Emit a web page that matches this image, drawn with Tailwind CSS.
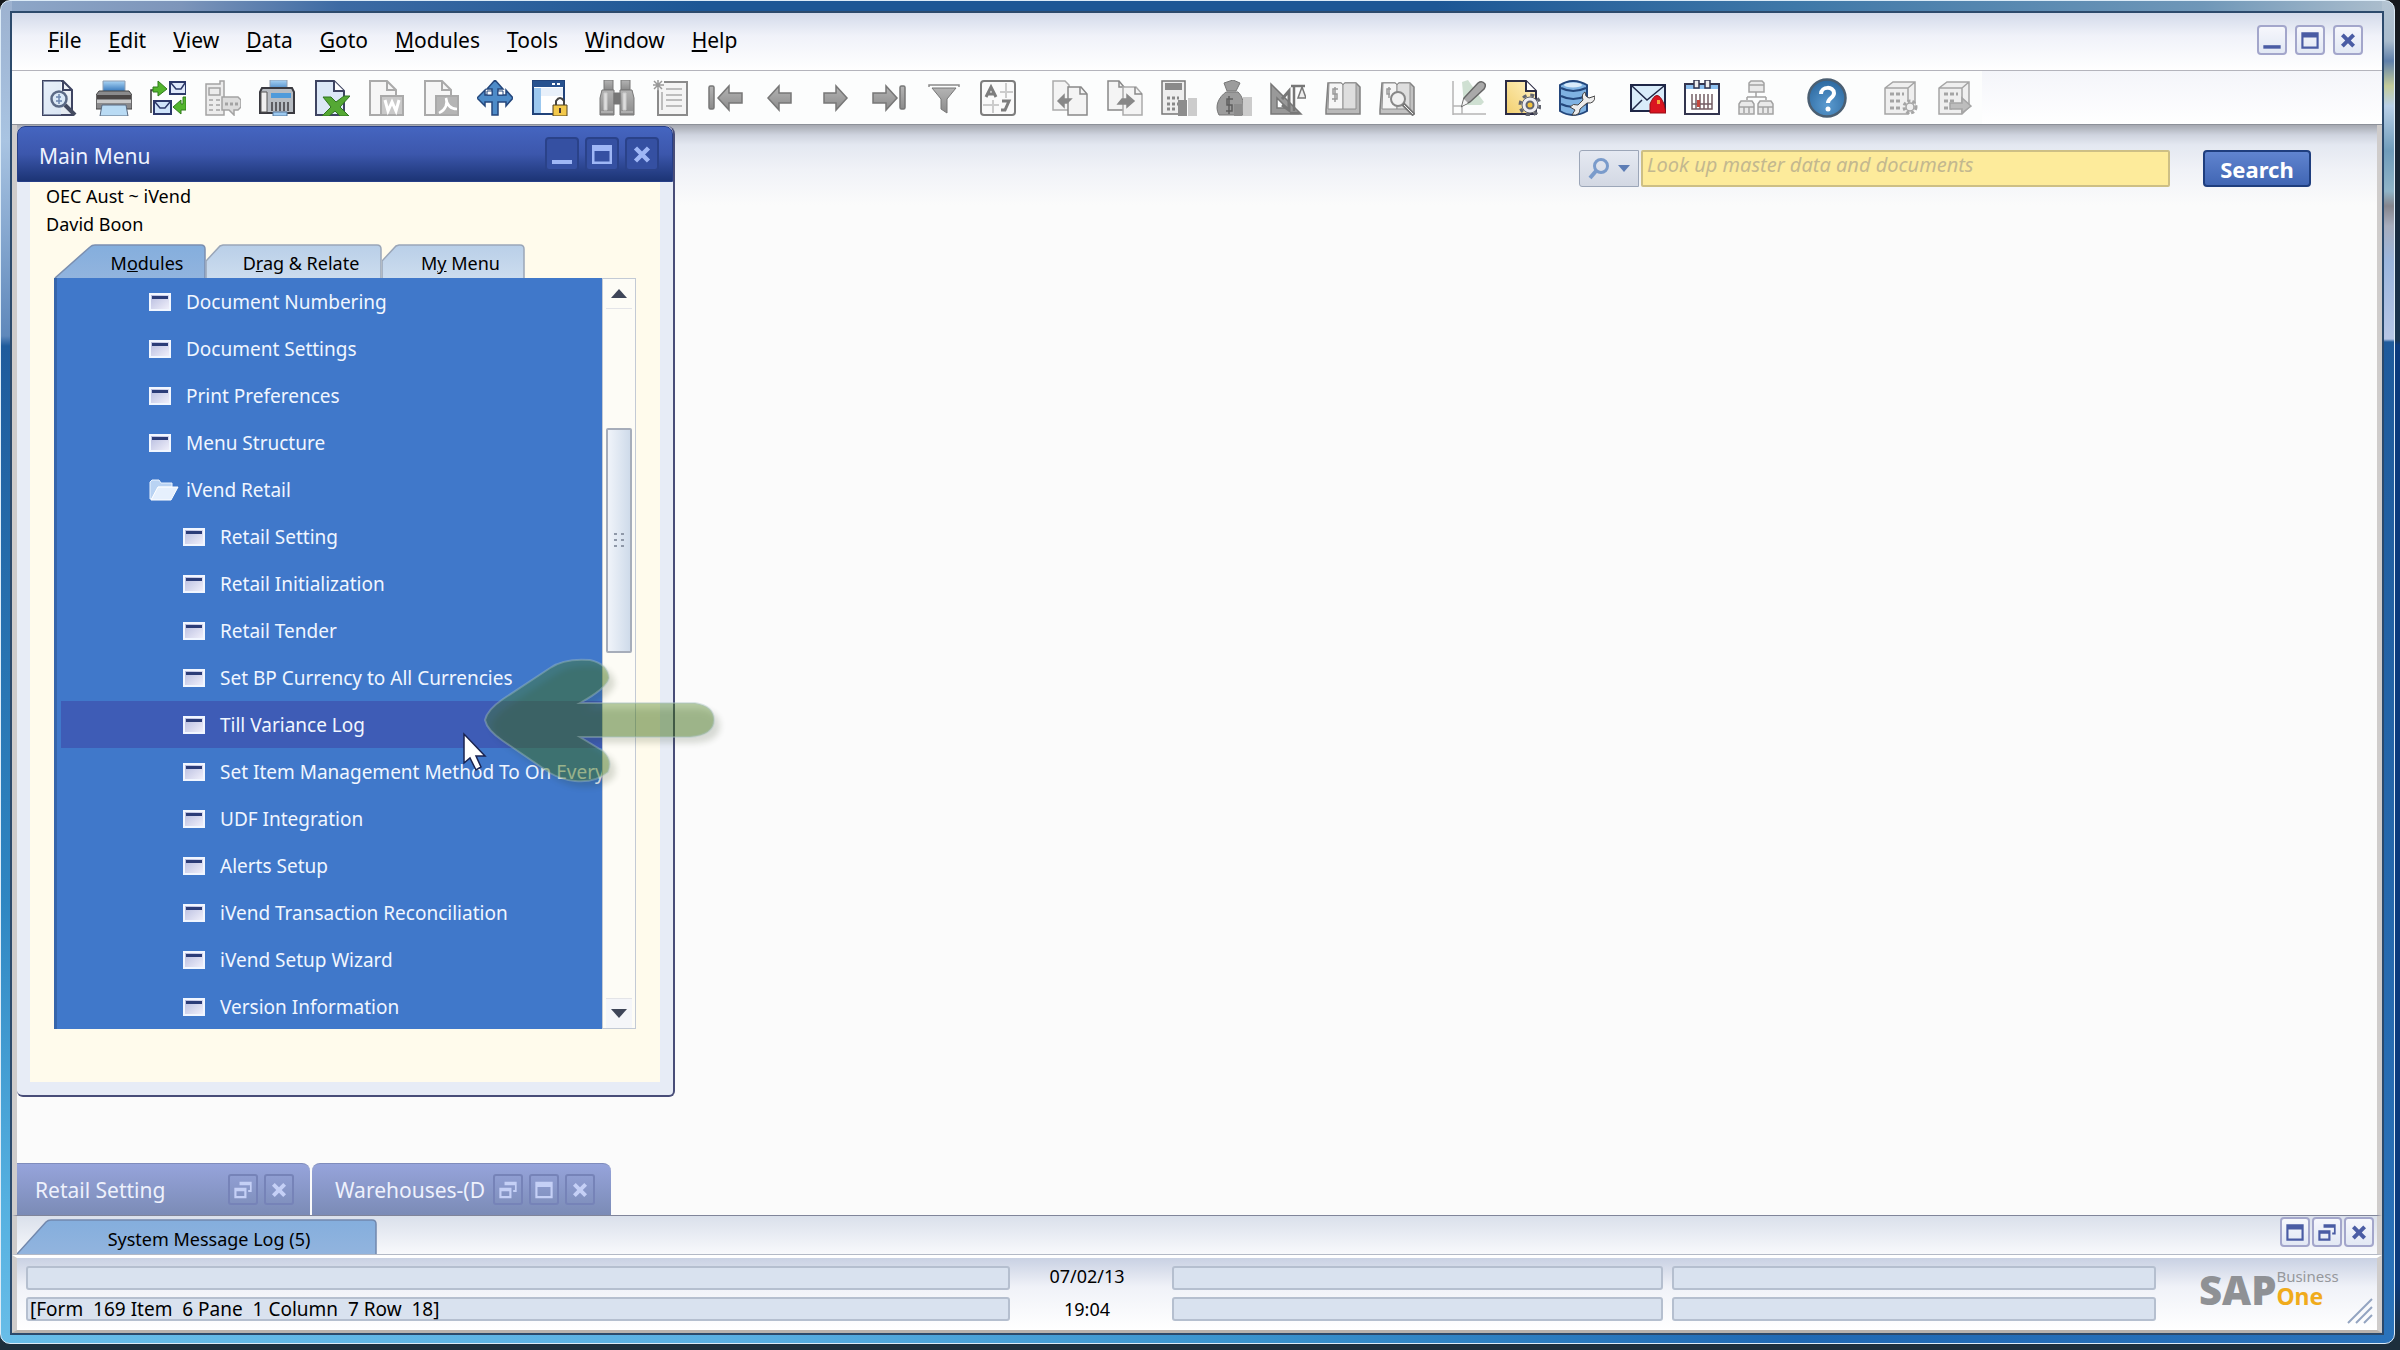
<!DOCTYPE html>
<html lang="en">
<head>
<meta charset="utf-8">
<title>SAP Business One</title>
<script src="https://cdn.jsdelivr.net/npm/@tailwindcss/browser@4"></script>
</head>
<body class="flex h-screen flex-col overflow-hidden bg-[linear-gradient(to_bottom,#15181c_0,#1a3550_340px,#0b3a7c_345px,#0b3a7c_95%,#1d2f3d_99%)] pr-[5px] pb-[6px] font-['Noto_Sans',sans-serif] text-[18px] leading-6 text-black">

<svg class="absolute size-0" aria-hidden="true">
  <defs>
    <linearGradient id="gBlue" x1="0" y1="0" x2="0" y2="1"><stop offset="0" stop-color="#a9d4f5"/><stop offset="1" stop-color="#2f72b8"/></linearGradient>
    <linearGradient id="gGray" x1="0" y1="0" x2="0" y2="1"><stop offset="0" stop-color="#b4b4b4"/><stop offset="1" stop-color="#8b8b8b"/></linearGradient>
    <linearGradient id="gPage" x1="0" y1="0" x2="1" y2="1"><stop offset="0" stop-color="#fff"/><stop offset="1" stop-color="#dfe6ee"/></linearGradient>
    <linearGradient id="gGold" x1="0" y1="1" x2="1" y2="0"><stop offset="0" stop-color="#f2cf6e"/><stop offset="1" stop-color="#fff2c4"/></linearGradient>
    <radialGradient id="gHelp" cx=".5" cy=".7" r=".7"><stop offset="0" stop-color="#5b9bd0"/><stop offset="1" stop-color="#2c689f"/></radialGradient>
    <linearGradient id="gTabOn" x1="0" y1="0" x2="0" y2="1"><stop offset="0" stop-color="#84aedd"/><stop offset="1" stop-color="#92b4de"/></linearGradient>
    <linearGradient id="gTab" x1="0" y1="0" x2="0" y2="1"><stop offset="0" stop-color="#b9cfe8"/><stop offset="1" stop-color="#ccdcee"/></linearGradient>
    <linearGradient id="gItem" x1="0" y1="0" x2="1" y2="1"><stop offset="0" stop-color="#b3b9dd"/><stop offset="1" stop-color="#f3f2fc"/></linearGradient>
  </defs>
  <symbol id="form" viewBox="0 0 22 18"><rect x="1" y="1" width="20" height="16" fill="url(#gItem)" stroke="#f1f6ff" stroke-width="2"/><rect x="3" y="3" width="16" height="3" fill="#2c3d78"/></symbol>
  <symbol id="min" viewBox="0 0 30 30"><rect x="5" y="21" width="20" height="4" fill="currentColor"/></symbol>
  <symbol id="max" viewBox="0 0 30 30"><path fill="currentColor" fill-rule="evenodd" d="M5 6H25V25H5ZM7.500 12V22.500H22.500V12Z"/></symbol>
  <symbol id="rest" viewBox="0 0 30 30"><path fill="currentColor" fill-rule="evenodd" d="M11 6H25V18H21V15.500H23V10H11ZM5 13H19V25H5ZM7.500 17V22.500H16.500V17Z"/></symbol>
  <symbol id="close" viewBox="0 0 30 30"><path d="M8.500 9L21.500 22M21.500 9L8.500 22" stroke="currentColor" stroke-width="4.500"/></symbol>
</svg>

<!-- Glass window frame: bottom, left, right and top edges -->
<div class="flex min-h-0 flex-1 flex-col rounded-[10px] border border-[#dcebf7] bg-[linear-gradient(to_right,#68bde8_0,#5bb0e2_30%,#3a93cd_52%,#2069b4_75%,#2a73bb_100%),linear-gradient(to_bottom,#9db2d0_0,#a9c4e2_140px,#5f88bb_335px,#1f5b9c_345px,#2f86c2_900px,#55b0e0_1200px,#68bde8_100%),linear-gradient(to_bottom,#b4c4d2_0,#a9bccd_40px,#5f80aa_60px,#c3cc9a_85px,#b9d0e8_105px,#6f9cba_150px,#8fb4c8_190px,#85858d_205px,#a7adbd_225px,#9bb6dd_260px,#b7c6e6_338px,#1f5b9c_341px,#2a73bb_100%),linear-gradient(to_right,#8ea7c8_0,#7d95ba_180px,#3c6aa3_340px,#1d5795_700px,#1d5795_60%,#3f78a8_75%,#6f97b8_92%,#aebfce_100%)] bg-[length:100%_10px,11px_100%,12px_100%,100%_100%] bg-[position:bottom,left,right,top] bg-no-repeat pt-[10px] pr-[10px] pb-2 pl-[9px]">
 <div class="flex min-h-0 flex-1 flex-col border-2 border-[#2c4a6c] bg-white">

  <!-- Menu bar -->
  <header class="flex h-[58px] shrink-0 items-center justify-between border-b border-[#b4b4bc] bg-linear-to-b from-[#d3daea] via-[#f0f2f9] via-40% to-white pr-[19px] pb-1 pl-[36px]">
    <nav class="flex gap-[27px] text-[21px] leading-7">
      <a href="#"><u>F</u>ile</a><a href="#"><u>E</u>dit</a><a href="#"><u>V</u>iew</a><a href="#"><u>D</u>ata</a><a href="#"><u>G</u>oto</a><a href="#"><u>M</u>odules</a><a href="#"><u>T</u>ools</a><a href="#"><u>W</u>indow</a><a href="#"><u>H</u>elp</a>
    </nav>
    <div class="flex gap-2 text-[#4a5ca4]">
      <button aria-label="Minimize" class="size-[30px] rounded-[4px] border-2 border-[#a3a6cb] bg-linear-to-b from-[#f6f7fc] to-[#e2e8f4]"><svg class="size-full"><use href="#min"/></svg></button>
      <button aria-label="Maximize" class="size-[30px] rounded-[4px] border-2 border-[#a3a6cb] bg-linear-to-b from-[#f6f7fc] to-[#e2e8f4]"><svg class="size-full"><use href="#max"/></svg></button>
      <button aria-label="Close" class="size-[30px] rounded-[4px] border-2 border-[#a3a6cb] bg-linear-to-b from-[#f6f7fc] to-[#e2e8f4]"><svg class="size-full"><use href="#close"/></svg></button>
    </div>
  </header>

  <!-- Toolbar -->
  <div class="flex h-[54px] shrink-0 items-center border-b border-[#8d9199] bg-linear-to-b from-[#f4f5fa] to-white">
   <div class="flex h-full items-center bg-[#fcfdfd] pr-[10px] pl-[29px]">
    <div class="flex w-[527px] justify-between">
      <button aria-label="Preview"><svg class="size-9" viewBox="0 0 36 36" fill="none"><path d="M2 1H22L31 10V35H2Z" fill="url(#gPage)" stroke="#3e4462" stroke-width="2"/><path d="M2 1H20V35H2Z" fill="#cfe2f6" opacity=".5"/><path d="M22 1V10H31" stroke="#3e4462" stroke-width="2"/><circle cx="18" cy="19" r="7.500" fill="#dbe9f7" stroke="#5b6a86" stroke-width="2.500"/><path d="M18 14V24M15 17h5M15 21h6" stroke="#6d87b0" stroke-width="1.500"/><path d="M24 25L34 35" stroke="#444b60" stroke-width="4"/></svg></button>
      <button aria-label="Print"><svg class="size-9" viewBox="0 0 36 36"><path d="M7 1H29V12H7Z" fill="url(#gBlue)" stroke="#8f9eb2"/><path d="M3 11H33L36 15V29H0V15Z" fill="#8a8a8c" stroke="#444"/><path d="M1 15H35V19H1Z" fill="#4a4646"/><path d="M1 20H35V23H1Z" fill="#c9c9c9"/><path d="M6 25H30L32 36H4Z" fill="#b9dbf4" stroke="#5a6a80"/></svg></button>
      <button aria-label="E-mail"><svg class="size-9" viewBox="0 0 36 36" fill="none"><path d="M1 33V10H5" stroke="#333" stroke-width="1.500"/><path d="M3 7H8V1L17 9L8 16V12H3Z" fill="#53b52d" stroke="#2f7d1b"/><path d="M20 2H36V14H20Z" fill="#dfe8fa" stroke="#2c3869" stroke-width="2"/><path d="M21 3L26 9H31L35 3" stroke="#2c3869" stroke-width="1.500"/><path d="M4 21H21V34H4Z" fill="#cfe4fa" stroke="#2c3869" stroke-width="2"/><path d="M5 22L10 28H15L20 22" stroke="#2c3869" stroke-width="1.500"/><path d="M36 17V30H31V34L23 27L31 20V24H33V17Z" fill="#53b52d" stroke="#2f7d1b"/></svg></button>
      <button aria-label="SMS"><svg class="size-9" viewBox="0 0 36 36" fill="none" stroke="#a3a3a3" stroke-width="1.500"><path d="M1 4H15V1H19V35H1Z" fill="#ececec"/><path d="M4 8H15V15H4ZM4 20H8M11 20H15M4 25H8M11 25H15M4 30H8M11 30H15"/><path d="M17 17H33L36 20V27L33 30H29V35L24 30H17Z" fill="#dcdcdc"/><path d="M20 24H34" stroke-width="3" stroke-dasharray="3 2"/></svg></button>
      <button aria-label="Fax"><svg class="size-9" viewBox="0 0 36 36"><path d="M11 0H28V12H11Z" fill="url(#gBlue)" stroke="#8f9eb2"/><path d="M3 8H33L35 12V33H1V12Z" fill="#b7bcc2" stroke="#3a3a40" stroke-width="2"/><path d="M2 12H8V32H2Z" fill="#efefef" stroke="#555"/><path d="M12 13H32V18H12Z" fill="#4f9bdb"/><path d="M13 22V31M17 22V31M21 22V31M25 22V31M29 22V31" stroke="#5d5d62" stroke-width="2"/><path d="M14 32H28V36H14Z" fill="#9cc9ef" stroke="#55779b"/></svg></button>
      <button aria-label="Export to Excel"><svg class="size-9" viewBox="0 0 36 36"><path d="M2 1H20L30 11V35H2Z" fill="#dce8f7" stroke="#3e4462" stroke-width="2"/><path d="M20 1V11H30" fill="#fff" stroke="#3e4462" stroke-width="2"/><path d="M9 17H17L22 22L30 16H36L26 27L35 36H26L21 31L15 36H8L17 27Z" fill="#55a834" stroke="#2f7420"/></svg></button>
      <button aria-label="Export to Word"><svg class="size-9" viewBox="0 0 36 36" fill="none" stroke="#aaa" stroke-width="2"><path d="M2 1H19L28 10V35H2Z" fill="#f6f6f6"/><path d="M19 1V10H28"/><path d="M13 16H35V35H13Z" fill="#c9c9c9"/><path d="M17 20L20 31L24 22L28 31L31 20" stroke="#fff" stroke-width="3"/></svg></button>
      <button aria-label="Export to PDF"><svg class="size-9" viewBox="0 0 36 36" fill="none" stroke="#aaa" stroke-width="2"><path d="M2 1H19L28 10V35H2Z" fill="#f6f6f6"/><path d="M19 1V10H28"/><path d="M13 16H35V35H13Z" fill="#b5b5b5"/><path d="M16 33C22 30 25 25 23 18C24 26 28 29 34 29" stroke="#fff" stroke-width="2.500"/></svg></button>
      <button aria-label="Launch application"><svg class="size-9" viewBox="0 0 36 36"><path d="M18 0L26 9H21V15H29V10L36 18L29 26V22H21V35H15V22H8V26L0 18L8 10V15H15V9H10Z" fill="#4d8bc8" stroke="#24477c" stroke-width="1.500"/><path d="M10 11H15V15H10ZM21 11H26V15H21Z" fill="#fff" stroke="#24477c"/></svg></button>
      <button aria-label="Lock screen"><svg class="size-9" viewBox="0 0 36 36"><path d="M1 1H32V34H1Z" fill="#fff" stroke="#21437a" stroke-width="2"/><path d="M1 1H32V7H1Z" fill="#27528f"/><path d="M20 3h3v2h-3zM25 3h3v2h-3z" fill="#fff"/><path d="M2 8H9V33H2Z" fill="#9cc8ef"/><path d="M9 8H31V16H9Z" fill="#e8f0fa"/><path d="M24 26V21Q28 15 32 21V26" fill="none" stroke="#444" stroke-width="2"/><path d="M21 25H35V36H21Z" fill="#f3c94b" stroke="#534220"/><path d="M27 28h2v5h-2z" fill="#433"/></svg></button>
    </div>
    <div class="ml-[31px] flex w-[417px] justify-between">
      <button aria-label="Find"><svg class="size-9" viewBox="0 0 36 36" fill="url(#gGray)" stroke="#777"><path d="M5 0H14V10H5ZM22 0H31V10H22Z"/><path d="M3 10H15V35H1V18ZM21 10H33L35 18V35H21Z"/><path d="M15 13H21V24H15Z" fill="#777"/><path d="M5 13H8V30H5ZM24 13H27V30H24ZM2 32H14M22 32H34" fill="#ddd" stroke="#ccc"/></svg></button>
      <button aria-label="Add"><svg class="size-9" viewBox="0 0 36 36" fill="none" stroke="#8b8b8b" stroke-width="1.500"><path d="M5 10V35H34V2H11" fill="#f4f4f4" stroke-width="2"/><path d="M13 9H29M13 15H29M13 20H29M13 26H29M9 12v18" stroke="#aaa"/><path d="M5 0V11M0 5H11M1 1L9 9M9 1L1 9" stroke="#999"/></svg></button>
      <button aria-label="First record"><svg class="size-9" viewBox="0 0 36 36" fill="url(#gGray)" stroke="#777" stroke-width="1.500"><rect x="1" y="6" width="5" height="23" rx="1.500"/><path d="M10 18L21 6V13H34V23H21V30Z"/></svg></button>
      <button aria-label="Previous record"><svg class="size-9" viewBox="0 0 36 36" fill="url(#gGray)" stroke="#777" stroke-width="1.500"><path d="M6 18L17 6V13H29V23H17V30Z"/></svg></button>
      <button aria-label="Next record"><svg class="size-9" viewBox="0 0 36 36" fill="url(#gGray)" stroke="#777" stroke-width="1.500"><path d="M30 18L19 6V13H7V23H19V30Z"/></svg></button>
      <button aria-label="Last record"><svg class="size-9" viewBox="0 0 36 36" fill="url(#gGray)" stroke="#777" stroke-width="1.500"><rect x="29" y="6" width="5" height="23" rx="1.500"/><path d="M26 18L15 6V13H2V23H15V30Z"/></svg></button>
      <button aria-label="Filter"><svg class="size-9" viewBox="0 0 36 36"><path d="M3 7V5H33V7" fill="none" stroke="#8a8a8a" stroke-width="1.500"/><path d="M6 8H30L21 19V33L15 29V19Z" fill="url(#gGray)" stroke="#777"/></svg></button>
      <button aria-label="Sort"><svg class="size-9" viewBox="0 0 36 36" fill="none" stroke="#7d7d7d"><rect x="1" y="1" width="34" height="34" rx="3" fill="#fafafa" stroke-width="2"/><path d="M20 12H33M3 25H19M13 20V33M26 3V18" stroke="#ccc" stroke-width="2"/><path d="M6 17L11 7L16 17M8 14H15" stroke-width="3"/><path d="M22 21H29L25 30H21" stroke-width="3"/></svg></button>
    </div>
    <div class="ml-9 flex w-[363px] justify-between">
      <button aria-label="Base document"><svg class="size-9" viewBox="0 0 36 36" fill="#f4f4f4" stroke="#888" stroke-width="1.500"><path d="M1 1H13L17 5V30H1Z" stroke="#aaa"/><path d="M16 7H29L35 14V35H16Z"/><path d="M28 7V14H35" fill="none"/><path d="M6 21L12 15V19H19L15 23H12V27Z" fill="#888"/></svg></button>
      <button aria-label="Target document"><svg class="size-9" viewBox="0 0 36 36" fill="#f4f4f4" stroke="#888" stroke-width="1.500"><path d="M1 1H12L17 7V30H1Z"/><path d="M12 1V7H17" fill="none"/><path d="M16 7H29L35 14V35H16Z" stroke="#aaa"/><path d="M28 7V14H35" fill="none"/><path d="M11 24L15 19H20V15L27 21L20 27V24Z" fill="#888"/></svg></button>
      <button aria-label="Gross profit"><svg class="size-9" viewBox="0 0 36 36"><path d="M1 1H24V34H1Z" fill="#eee" stroke="#777" stroke-width="1.500"/><path d="M4 3H21V10H4Z" fill="#8a8a8a"/><path d="M6 18H18M6 24H18M6 29H15" stroke="#888" stroke-width="3" stroke-dasharray="3 2"/><path d="M17 20H26V36H17Z" fill="#8d8d8d"/><path d="M27 18H36V36H27Z" fill="#ccc"/></svg></button>
      <button aria-label="Payment means"><svg class="size-9" viewBox="0 0 36 36"><path d="M8 3L17 0L24 3L20 11H11ZM10 12H22C27 17 28 22 27 35H3C-2 26 3 17 10 12Z" fill="#9c9c9c" stroke="#777"/><path d="M17 19H11V25H16V31H10M13 16V34" fill="none" stroke="#5e5e5e" stroke-width="1.500"/><path d="M18 24H26V36H18Z" fill="#8d8d8d"/><path d="M27 17H36V36H27Z" fill="#ccc"/></svg></button>
      <button aria-label="Volume and weight"><svg class="size-9" viewBox="0 0 36 36" fill="none" stroke="#777" stroke-width="1.500"><path fill-rule="evenodd" d="M1 4L31 34H1ZM7 18V28H17Z" fill="#999"/><path d="M12 19L19 11V30L12 25" stroke-width="3"/><path d="M21 6H35M24 6V31M20 33H29" stroke-width="2.500"/><path d="M32 7L28 18H36Z" fill="#eee"/></svg></button>
      <button aria-label="Transaction journal"><svg class="size-9" viewBox="0 0 36 36"><path d="M1 30L3 3H16L18 5L20 3H31L35 7V34H1Z" fill="#b9b9b9" stroke="#808080" stroke-width="1.500"/><path d="M4 3H16L18 5V29H3Z" fill="#f5f5f5" stroke="#909090"/><path d="M18 5L20 3H31V29H18Z" fill="#dedede" stroke="#909090"/><path d="M13 9H8V14H12V19H7M10 7V22" fill="none" stroke="#999" stroke-width="1.500"/></svg></button>
      <button aria-label="Journal preview"><svg class="size-9" viewBox="0 0 36 36"><path d="M1 30L3 3H16L18 5L20 3H31L35 7V34H1Z" fill="#c2c2c2" stroke="#808080" stroke-width="1.500"/><path d="M4 3H16L18 5V29H3Z" fill="#f5f5f5" stroke="#909090"/><path d="M18 5L20 3H31V29H18Z" fill="#dedede" stroke="#909090"/><path d="M12 9H8V14H11M10 7V18" fill="none" stroke="#999" stroke-width="1.500"/><circle cx="19" cy="19" r="7" fill="#f1f1f1" stroke="#888" stroke-width="2"/><path d="M24 24L35 35" stroke="#777" stroke-width="4"/><path d="M25 25L34 34" stroke="#eee"/></svg></button>
    </div>
    <div class="ml-[35px] flex w-[145px] justify-between">
      <button aria-label="Layout designer"><svg class="size-9" viewBox="0 0 36 36"><path d="M12 2L18 0L25 10L34 22L31 25H14Z" fill="#cfe0d2"/><path d="M3 1V35M3 34H36M3 26H12V34" fill="none" stroke="#b5b5b5" stroke-width="1.500"/><path d="M12 26L14 18L28 3Q32 0 35 4Q36 6 34 9L20 22Z" fill="#a9a9a9" stroke="#666" stroke-width="1.500"/><path d="M12 26L18 23L14 19Z" fill="#f4f4f4"/></svg></button>
      <button aria-label="Form settings"><svg class="size-9" viewBox="0 0 36 36"><path d="M1 1H21L31 11V34H1Z" fill="url(#gGold)" stroke="#2c2c44" stroke-width="2"/><path d="M21 1V11H31" fill="#fff" stroke="#2c2c44" stroke-width="2"/><circle cx="25" cy="25" r="10" fill="none" stroke="#62656f" stroke-width="3" stroke-dasharray="4 3.850"/><circle cx="25" cy="25" r="8" fill="#ededf2" stroke="#62656f"/><circle cx="25" cy="25" r="3.500" fill="#f3c33e" stroke="#62656f" stroke-width="2"/></svg></button>
      <button aria-label="Query manager"><svg class="size-9" viewBox="0 0 36 36"><path d="M1 5Q14-3 28 5V31Q14 39 1 31Z" fill="#7fb2e2" stroke="#24477c" stroke-width="2"/><path d="M2 8Q14 14 27 8M2 16Q14 22 27 16M2 24Q14 30 27 24" fill="none" stroke="#24477c" stroke-width="2"/><ellipse cx="14" cy="5" rx="9" ry="2.500" fill="#d8ebfa"/><path d="M26 12Q26 17 30 18L36 16Q36 24 28 23L21 29Q21 36 13 35L16 30L11 27Q14 23 19 25L24 20Q22 14 26 12Z" fill="#ececec" stroke="#444"/></svg></button>
    </div>
    <div class="ml-[35px] flex w-36 justify-between">
      <button aria-label="Messages"><svg class="size-9" viewBox="0 0 36 36"><path d="M1 5H35V31H1Z" fill="#d9ecfa" stroke="#1f2747" stroke-width="2"/><path d="M2 6L17 20L34 6M2 30L12 20" fill="none" stroke="#1f2747" stroke-width="1.500"/><path d="M20 33V24Q27 7 34 24L36 33Z" fill="#da1420" stroke="#960c14"/><path d="M27 20h3v4h-3z" fill="#f8a13c"/></svg></button>
      <button aria-label="Calendar"><svg class="size-9" viewBox="0 0 36 36"><path d="M1 4H35V34H1Z" fill="#fff" stroke="#33354f" stroke-width="2"/><path d="M2 5H34V9H2Z" fill="#8dc0f0"/><path d="M10 0h5v8h-5zM21 0h5v8h-5z" fill="#eee" stroke="#33354f" stroke-width="1.500"/><path d="M8 14V29H28V14M12 14V29M16 14V29M20 14V29M24 14V29M8 24H28" fill="none" stroke="#745d64" stroke-width="1.500"/><path d="M13 20H16V27H13Z" fill="#c3473d"/></svg></button>
      <button aria-label="Relationship map"><svg class="size-9" viewBox="0 0 36 36" fill="#e9e9e9" stroke="#a2a2a2" stroke-width="1.500"><path d="M11 3L13 1H24L26 3V12H11ZM11 5H26M9 17H28M18 12V17M9 17V20M28 17V20M1 24L3 21H14L16 24V34H1ZM1 27H16M20 24L22 21H33L35 24V34H20ZM20 27H35M6 27V33M11 27V33M25 27V33M30 27V33"/></svg></button>
    </div>
    <button aria-label="Help" class="ml-[33px]"><svg class="size-10" viewBox="0 0 40 40"><circle cx="20" cy="20" r="18.500" fill="url(#gHelp)" stroke="#4b5f72" stroke-width="2.500"/><path d="M14 16C14 8 27 8 27 15C27 20 21 20 21 25" fill="none" stroke="#fff" stroke-width="4"/><circle cx="21" cy="31" r="2.500" fill="#fff"/></svg></button>
    <div class="ml-[35px] flex w-[90px] justify-between">
      <button aria-label="Add-on settings"><svg class="size-9" viewBox="0 0 36 36" fill="#efefef" stroke="#a5a5a5" stroke-width="1.500"><path d="M3 8L11 2H33V27L26 34H3ZM3 8H26V34M26 8L33 2"/><path d="M8 14h14M8 21h12M8 28h10" stroke-width="3" stroke-dasharray="4 2"/><circle cx="28" cy="27" r="6" stroke-width="3" stroke-dasharray="3 2"/><circle cx="28" cy="27" r="4"/></svg></button>
      <button aria-label="Add-on export"><svg class="size-9" viewBox="0 0 36 36" fill="#efefef" stroke="#a5a5a5" stroke-width="1.500"><path d="M3 8L11 2H33V27L26 34H3ZM3 8H26V34M26 8L33 2"/><path d="M8 14h14M8 21h12M8 28h8" stroke-width="3" stroke-dasharray="4 2"/><path d="M14 23H26V18L35 26L26 33V29H14Z" fill="#bdbdbd"/></svg></button>
    </div>
   </div>
  </div>

  <!-- Workspace -->
  <main class="flex min-h-0 flex-1 flex-col border-x-[5px] border-[#cfcccb] bg-[#fbfbfb] bg-[linear-gradient(to_bottom,#a5a8b0_0,#cfd4df_10px,#e4e8f1_20px,#f0f2f7_45px,#fbfbfb_80px)] bg-no-repeat pt-[1px]">
    <div class="flex items-start justify-between">

      <section class="relative w-[658px] rounded-t-[8px] rounded-b-[6px] border-r-2 border-b-2 border-[#484d78] bg-[#e7ecf6]">
        <div class="flex h-[56px] items-center justify-between rounded-t-[8px] border border-[#273f87] bg-linear-to-b from-[#4565c0] via-[#3c57ac] via-50% to-[#1c3475] pr-[13px] pl-[21px]">
          <h1 class="pt-1 text-[21px] leading-7 text-[#eef3ff]">Main Menu</h1>
          <div class="flex gap-[6px] text-[#9fb7f6]">
            <button aria-label="Minimize" class="size-[34px] rounded-[4px] border-2 border-[#2a4289] bg-[#3550a2]"><svg class="size-full"><use href="#min"/></svg></button>
            <button aria-label="Maximize" class="size-[34px] rounded-[4px] border-2 border-[#2a4289] bg-[#3550a2]"><svg class="size-full"><use href="#max"/></svg></button>
            <button aria-label="Close" class="size-[34px] rounded-[4px] border-2 border-[#2a4289] bg-[#3550a2]"><svg class="size-full"><use href="#close"/></svg></button>
          </div>
        </div>
        <div class="mx-[13px] mb-[13px] bg-[#fffbec] pr-6 pb-[53px] pl-6">
          <p class="-ml-2 leading-[28px]">OEC Aust ~ iVend</p>
          <p class="-ml-2 leading-[28px]">David Boon</p>
          <div class="mt-[6px] flex h-[34px]">
            <button class="relative w-[152px] pt-1"><svg class="absolute inset-0 size-full" viewBox="0 0 152 34"><path d="M1 34L36 3Q38 1 41 1H147Q151 1 151 5V34" fill="url(#gTabOn)" stroke="#7b8fb0" stroke-width="1.500"/></svg><span class="relative pl-[34px]">M<u>o</u>dules</span></button>
            <button class="relative w-[176px] pt-1"><svg class="absolute inset-0 size-full" viewBox="0 0 176 34"><path d="M0 34V17L14 2L17 1H171Q175 1 175 5V34" fill="url(#gTab)" stroke="#9aa6b8" stroke-width="1.500"/></svg><span class="relative pl-[14px]">D<u>r</u>ag &amp; Relate</span></button>
            <button class="relative w-[143px] pt-1"><svg class="absolute inset-0 size-full" viewBox="0 0 143 34"><path d="M0 34V17L14 2L17 1H138Q142 1 142 5V34" fill="url(#gTab)" stroke="#9aa6b8" stroke-width="1.500"/></svg><span class="relative pl-[14px]">M<u>y</u> Menu</span></button>
          </div>
          <div class="flex h-[751px]">
            <ul class="w-[548px] overflow-hidden border-l-[3px] border-[#3665ab] bg-[#4078ca] text-[19px] whitespace-nowrap text-[#f0f6ff]">
              <li class="flex h-[47px] items-center gap-[15px] pl-[92px]"><svg class="h-[18px] w-[22px] shrink-0"><use href="#form"/></svg><a href="#">Document Numbering</a></li>
              <li class="flex h-[47px] items-center gap-[15px] pl-[92px]"><svg class="h-[18px] w-[22px] shrink-0"><use href="#form"/></svg><a href="#">Document Settings</a></li>
              <li class="flex h-[47px] items-center gap-[15px] pl-[92px]"><svg class="h-[18px] w-[22px] shrink-0"><use href="#form"/></svg><a href="#">Print Preferences</a></li>
              <li class="flex h-[47px] items-center gap-[15px] pl-[92px]"><svg class="h-[18px] w-[22px] shrink-0"><use href="#form"/></svg><a href="#">Menu Structure</a></li>
              <li class="flex h-[47px] items-center gap-[7px] pl-[92px]"><svg class="h-[22px] w-[30px] shrink-0" viewBox="0 0 30 22"><path d="M1 20V3L3 1H10L12 4H23V8H9L3 20Z" fill="#b9d3f3" stroke="#eaf3ff"/><path d="M9 8H29L22 21H2Z" fill="#e6f0fd" stroke="#fff"/></svg><a href="#">iVend Retail</a></li>
              <li class="flex h-[47px] items-center gap-[15px] pl-[126px]"><svg class="h-[18px] w-[22px] shrink-0"><use href="#form"/></svg><a href="#">Retail Setting</a></li>
              <li class="flex h-[47px] items-center gap-[15px] pl-[126px]"><svg class="h-[18px] w-[22px] shrink-0"><use href="#form"/></svg><a href="#">Retail Initialization</a></li>
              <li class="flex h-[47px] items-center gap-[15px] pl-[126px]"><svg class="h-[18px] w-[22px] shrink-0"><use href="#form"/></svg><a href="#">Retail Tender</a></li>
              <li class="flex h-[47px] items-center gap-[15px] pl-[126px]"><svg class="h-[18px] w-[22px] shrink-0"><use href="#form"/></svg><a href="#">Set BP Currency to All Currencies</a></li>
              <li class="ml-1 flex h-[47px] items-center gap-[15px] bg-[#3e5cb6] pl-[122px]"><svg class="h-[18px] w-[22px] shrink-0"><use href="#form"/></svg><a href="#">Till Variance Log</a></li>
              <li class="flex h-[47px] items-center gap-[15px] pl-[126px]"><svg class="h-[18px] w-[22px] shrink-0"><use href="#form"/></svg><a href="#">Set Item Management Method To On Every</a></li>
              <li class="flex h-[47px] items-center gap-[15px] pl-[126px]"><svg class="h-[18px] w-[22px] shrink-0"><use href="#form"/></svg><a href="#">UDF Integration</a></li>
              <li class="flex h-[47px] items-center gap-[15px] pl-[126px]"><svg class="h-[18px] w-[22px] shrink-0"><use href="#form"/></svg><a href="#">Alerts Setup</a></li>
              <li class="flex h-[47px] items-center gap-[15px] pl-[126px]"><svg class="h-[18px] w-[22px] shrink-0"><use href="#form"/></svg><a href="#">iVend Transaction Reconciliation</a></li>
              <li class="flex h-[47px] items-center gap-[15px] pl-[126px]"><svg class="h-[18px] w-[22px] shrink-0"><use href="#form"/></svg><a href="#">iVend Setup Wizard</a></li>
              <li class="flex h-[47px] items-center gap-[15px] pl-[126px]"><svg class="h-[18px] w-[22px] shrink-0"><use href="#form"/></svg><a href="#">Version Information</a></li>
            </ul>
            <div class="flex w-[34px] flex-col border border-[#c3cad5] bg-[#fdfcf6] px-[3px]">
              <button aria-label="Scroll up" class="flex h-[30px] items-center justify-center border-b border-[#e3e4e8]"><svg class="h-[9px] w-4" viewBox="0 0 16 9"><path d="M0 9L8 0L16 9Z" fill="#3f4658"/></svg></button>
              <div class="mt-[119px] flex h-[225px] items-center justify-center rounded-[2px] border-2 border-[#a6adba] bg-linear-to-r from-[#f0f4fa] to-[#cfdbea]">
                <svg class="h-[18px] w-3" viewBox="0 0 12 18" fill="#8f98a8"><path d="M1 1h3v2H1zM8 1h3v2H8zM1 7h3v2H1zM8 7h3v2H8zM1 13h3v2H1zM8 13h3v2H8z"/></svg>
              </div>
              <button aria-label="Scroll down" class="mt-auto flex h-[30px] items-center justify-center border-t border-[#e3e4e8] bg-[#f5f6f9]"><svg class="h-[9px] w-4" viewBox="0 0 16 9"><path d="M0 0L8 9L16 0Z" fill="#3f4658"/></svg></button>
            </div>
          </div>
        </div>

        <!-- Callout arrow and mouse pointer -->
        <svg class="pointer-events-none absolute top-[514px] left-[443px] h-40 w-[270px] overflow-visible" viewBox="60 0 270 160">
          <path d="M85 80Q87 70 103 59L150 28Q164 18 190 20Q208 24 209 38Q207 48 180 63H295Q314 66 314 80Q314 95 290 97H180L203 111Q213 120 208 132Q195 143 175 141Q162 140 150 133L103 101Q87 90 85 80Z" fill="#1e3010" opacity=".16" transform="translate(6 6)" style="filter:blur(3px)"/>
          <path d="M85 80Q87 70 103 59L150 28Q164 18 190 20Q208 24 209 38Q207 48 180 63H295Q314 66 314 80Q314 95 290 97H180L203 111Q213 120 208 132Q195 143 175 141Q162 140 150 133L103 101Q87 90 85 80Z" fill="#427a10" fill-opacity=".38" stroke="#a9c4c4" stroke-opacity=".4" stroke-width="2"/>
          <path d="M64 94V123L70 118L76 130L81 127L76 116H85Z" fill="#fff" stroke="#1a2350" stroke-width="1.500"/>
        </svg>
      </section>

      <form class="mt-[24px] mr-[66px] flex h-[37px]">
        <button type="button" aria-label="Search type" class="mr-[2px] flex w-[60px] items-center justify-center gap-2 rounded-l-[3px] border border-[#9ca6b8] bg-linear-to-b from-[#e5e9f2] to-[#d3d8e3]">
          <svg class="h-6 w-[22px]" viewBox="0 0 22 24" fill="none" stroke="#7a9bcb"><circle cx="13" cy="9" r="6.500" stroke-width="3"/><path d="M8 14L2 21" stroke-width="4"/></svg>
          <svg class="h-[7px] w-3" viewBox="0 0 12 7"><path d="M0 0H12L6 7Z" fill="#5d7db5"/></svg>
        </button>
        <input type="text" aria-label="Look up" placeholder="Look up master data and documents" class="w-[529px] rounded-[2px] border-2 border-[#cdbf85] bg-[#fdeb9b] px-1 pb-2 text-[20px] italic placeholder:text-[#c3b88f]">
        <button type="button" class="ml-[33px] w-[108px] rounded-[4px] border-2 border-[#1f3e7e] bg-linear-to-b from-[#6084cf] to-[#4166b4] text-[22px] leading-7 font-bold text-white">Search</button>
      </form>
    </div>

    <!-- Minimized windows -->
    <div class="mt-auto flex gap-[2px] text-[21px] leading-7 text-[#eef1fc]">
      <div class="flex h-[52px] w-[293px] items-center justify-between rounded-tr-[8px] border-t border-[#7f8cbc] bg-linear-to-b from-[#96a4db] to-[#7b8bb6] pr-4 pl-[18px]">
        <span>Retail Setting</span>
        <div class="flex gap-[6px] text-[#c5d0f6]">
          <button aria-label="Restore" class="h-[31px] w-[30px] rounded-[3px] border-2 border-[#7683b8]"><svg class="size-full"><use href="#rest"/></svg></button>
          <button aria-label="Close" class="h-[31px] w-[30px] rounded-[3px] border-2 border-[#7683b8]"><svg class="size-full"><use href="#close"/></svg></button>
        </div>
      </div>
      <div class="flex h-[52px] w-[299px] items-center justify-between rounded-t-[8px] border-t border-[#7f8cbc] bg-linear-to-b from-[#96a4db] to-[#7b8bb6] pr-4 pl-[23px]">
        <span>Warehouses-(D</span>
        <div class="flex gap-[6px] text-[#c5d0f6]">
          <button aria-label="Restore" class="h-[31px] w-[30px] rounded-[3px] border-2 border-[#7683b8]"><svg class="size-full"><use href="#rest"/></svg></button>
          <button aria-label="Maximize" class="h-[31px] w-[30px] rounded-[3px] border-2 border-[#7683b8]"><svg class="size-full"><use href="#max"/></svg></button>
          <button aria-label="Close" class="h-[31px] w-[30px] rounded-[3px] border-2 border-[#7683b8]"><svg class="size-full"><use href="#close"/></svg></button>
        </div>
      </div>
    </div>
  </main>

  <!-- Message log -->
  <div class="flex h-10 shrink-0 items-end justify-between border-x-[5px] border-y border-x-[#cfcccb] border-t-[#80859a] border-b-[#b3b9c6] bg-linear-to-b from-[#dae0eb] to-[#f8f9fc] pr-[3px]">
    <button class="relative h-[35px] w-[360px] pt-1"><svg class="absolute inset-0 size-full" viewBox="0 0 360 35"><path d="M0 35L29 3Q31 1 34 1H355Q359 1 359 5V35" fill="url(#gTabOn)" stroke="#7288ad" stroke-width="1.500"/></svg><span class="relative pl-[24px]">System Message Log (5)</span></button>
    <div class="flex gap-[2px] self-start pt-[1px] text-[#4a5ca4]">
      <button aria-label="Maximize" class="size-[30px] rounded-[4px] border-2 border-[#a3a6cb] bg-linear-to-b from-[#f6f7fc] to-[#e2e8f4]"><svg class="size-full"><use href="#max"/></svg></button>
      <button aria-label="Restore" class="size-[30px] rounded-[4px] border-2 border-[#a3a6cb] bg-linear-to-b from-[#f6f7fc] to-[#e2e8f4]"><svg class="size-full"><use href="#rest"/></svg></button>
      <button aria-label="Close" class="size-[30px] rounded-[4px] border-2 border-[#a3a6cb] bg-linear-to-b from-[#f6f7fc] to-[#e2e8f4]"><svg class="size-full"><use href="#close"/></svg></button>
    </div>
  </div>

  <!-- Status bar -->
  <footer class="flex h-[78px] shrink-0 border-x-[5px] border-y-[3px] border-x-[#cfcccb] border-t-white border-b-[#b9b3ae] bg-linear-to-b from-[#c9d1e3] via-[#f0f2f8] via-40% to-white pt-[8px] pr-1 pl-[9px]">
    <div class="flex grow-[983] basis-0 flex-col gap-[7px]">
      <div class="h-6 rounded-[3px] border-2 border-[#b5bfcf] bg-[#d9e2ef]"></div>
      <div class="h-6 rounded-[3px] border-2 border-[#b5bfcf] bg-[#d9e2ef] pl-[2px] text-[19px] leading-5 whitespace-pre">[Form  169 Item  6 Pane  1 Column  7 Row  18]</div>
    </div>
    <div class="flex w-[162px] flex-col gap-[13px] pr-[8px] text-center leading-5"><time>07/02/13</time><time>19:04</time></div>
    <div class="flex grow-[490] basis-0 flex-col gap-[7px]">
      <div class="h-6 rounded-[3px] border-2 border-[#b5bfcf] bg-[#d9e2ef]"></div>
      <div class="h-6 rounded-[3px] border-2 border-[#b5bfcf] bg-[#d9e2ef]"></div>
    </div>
    <div class="ml-[9px] flex grow-[484] basis-0 flex-col gap-[7px]">
      <div class="h-6 rounded-[3px] border-2 border-[#b5bfcf] bg-[#d9e2ef]"></div>
      <div class="h-6 rounded-[3px] border-2 border-[#b5bfcf] bg-[#d9e2ef]"></div>
    </div>
    <div class="ml-[43px] flex w-[148px] items-start pt-[2px]">
      <span class="font-['Open_Sans',sans-serif] text-[40px] leading-[44px] font-extrabold text-[#8f9195]">SAP</span>
      <span class="flex flex-col text-[15px] leading-4 text-[#96989c]"><span>Business</span><span class="text-[23px] leading-6 font-bold text-[#f0ab1c]">One</span></span>
    </div>
    <svg class="mb-[6px] h-[26px] w-[26px] self-end" viewBox="0 0 26 26" stroke="#93a4c1" stroke-width="2"><path d="M1 25L25 1M9 25L25 9M17 25L25 17"/></svg>
  </footer>
 </div>
</div>
</body>
</html>
